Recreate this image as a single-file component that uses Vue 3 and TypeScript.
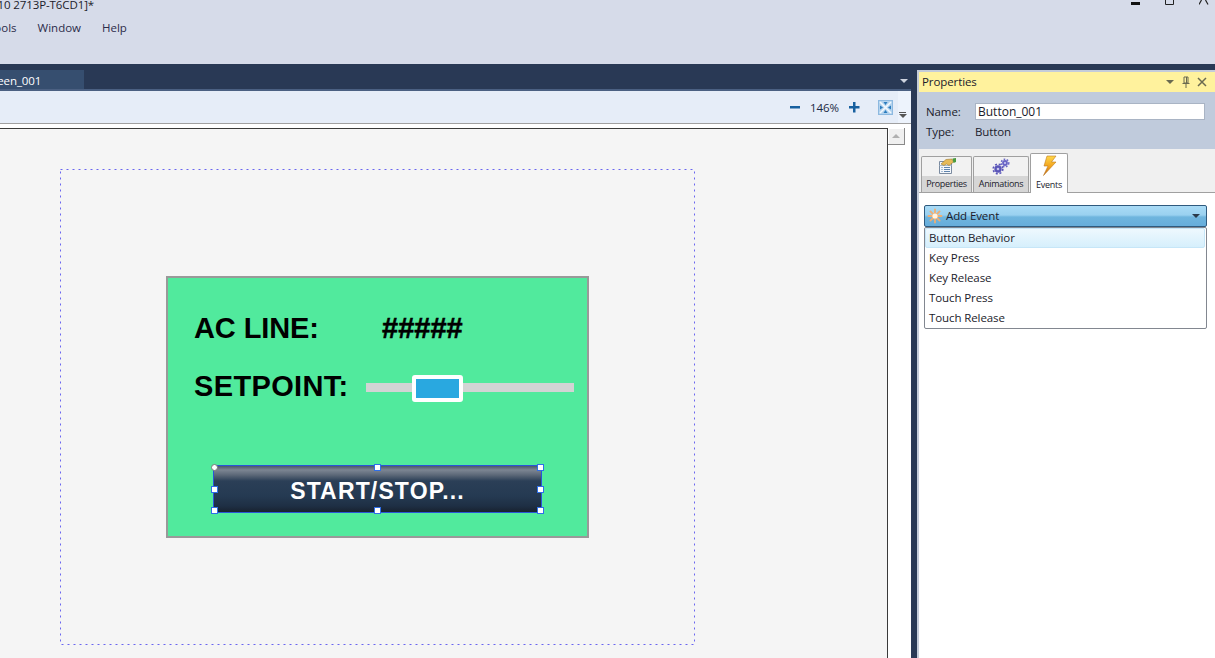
<template>
  <div class="app">
    <header class="top">
      <div class="title-row">
        <span class="title">[V10 2713P-T6CD1]*</span>
        <div class="win-btns">
          <svg width="10" height="5" viewBox="0 0 10 5"><rect x="0" y="2" width="9" height="3" fill="#111" /></svg>
          <svg width="10" height="5" viewBox="0 0 10 5"><path d="M.5 0v4.500h8V0" fill="none" stroke="#222" /></svg>
          <svg width="10" height="5" viewBox="0 0 10 5"><path d="M2.500 0 0 4.500M6.500 0 9 4.500" fill="none" stroke="#222" stroke-width="1.200" /></svg>
        </div>
      </div>
      <nav class="menu">
        <span v-for="m in menus" :key="m">{{ m }}</span>
      </nav>
    </header>

    <main class="body">
      <section class="editor">
        <div class="tab-strip">
          <div class="doc-tab">Screen_001</div>
          <span class="strip-arrow"></span>
        </div>
        <div class="toolbar">
          <div class="zoom-tools">
            <svg class="zoom-btn" width="11" height="11" viewBox="0 0 11 11"><rect y="4" width="10" height="2.500" fill="#17609f" /></svg>
            <span class="zoom-val">146%</span>
            <svg class="zoom-btn" width="11" height="11" viewBox="0 0 11 11"><path d="M0 4h4V0h2.500v4h4v2.500h-4v4H4v-4H0z" fill="#17609f" /></svg>
            <svg class="fit" width="15" height="15" viewBox="0 0 15 15">
              <rect width="15" height="15" fill="#b4d3ee" />
              <rect x=".5" y=".5" width="14" height="14" fill="none" stroke="#8db9e0" />
              <path d="M2 2l11 11M13 2 2 13" stroke="#f4f9fe" stroke-width="1.500" />
              <path d="M2 5.500v4l3-2zM13 5.500v4l-3-2zM5.500 2h4l-2 3zM5.500 13h4l-2-3z" fill="#2b7cbd" />
            </svg>
          </div>
          <div class="overflow">
            <i class="ov-line"></i>
            <i class="ov-arrow"></i>
          </div>
        </div>
        <div class="work">
          <div class="canvas">
            <div class="page">
              <svg class="page-frame" width="635" height="476" viewBox="0 0 635 476">
                <rect x=".5" y=".5" width="634" height="475" fill="none" stroke="#6a66f0" stroke-dasharray="2 4" />
              </svg>
              <div class="screen">
                <span class="lbl lbl-ac">AC LINE:</span>
                <span class="lbl lbl-val">#####</span>
                <span class="lbl lbl-set">SETPOINT:</span>
                <div class="track"></div>
                <div class="thumb"></div>
                <div class="hmi-btn">START/STOP...</div>
                <i
                  v-for="h in handles"
                  :key="h.id"
                  class="handle"
                  :class="{ round: h.round }"
                  :style="{ left: h.x + 'px', top: h.y + 'px' }"
                ></i>
              </div>
            </div>
          </div>
          <div class="vscroll">
            <div class="sc-up"><i></i></div>
          </div>
        </div>
      </section>

      <aside class="panel">
        <div class="p-title">
          <span>Properties</span>
          <div class="p-icons">
            <i class="p-drop"></i>
            <svg width="10" height="12" viewBox="0 0 10 12"><path d="M3 1h4v6H3zM5.500 1v6M1.500 7.500h7M5 8v4" fill="none" stroke="#6a6a50" /></svg>
            <svg width="10" height="10" viewBox="0 0 10 10"><path d="M1 1l8 8M9 1l-8 8" stroke="#6a6a50" stroke-width="1.500" /></svg>
          </div>
        </div>
        <div class="p-info">
          <div class="info-row">
            <label>Name:</label>
            <input value="Button_001" readonly />
          </div>
          <div class="info-row type">
            <label>Type:</label>
            <span>Button</span>
          </div>
        </div>
        <div class="p-tabs">
          <div class="ptab tab-props">
            <svg width="20" height="18" viewBox="0 0 20 18">
              <path d="M2.500 3.500h12v12h-12z" fill="#f4f7fb" stroke="#7b8ba0" />
              <path d="M2.500 7.500h12" stroke="#a9bbd0" />
              <path d="M4.500 9.500h1M7 9.500h6M4.500 11.500h1M7 11.500h6M4.500 13.500h1M7 13.500h6" stroke="#5f84ad" />
              <path d="M4 6l5-4.500 6-.5 1.500 3L12 7.500 9.500 6 7 7.500z" fill="#e6ba58" stroke="#a07c30" stroke-width=".6" />
              <path d="M15.500 .5 19 0v4l-2.500 1z" fill="#4a9a3e" />
            </svg>
            <span class="ptab-label">Properties</span>
          </div>
          <div class="ptab tab-anim">
            <svg width="20" height="18" viewBox="0 0 20 18">
              <circle cx="7" cy="11" r="3.700" fill="#5a55b8" />
              <circle cx="7" cy="11" r="4.800" fill="none" stroke="#5a55b8" stroke-width="1.600" stroke-dasharray="2 1.800" />
              <circle cx="7" cy="11" r="1.300" fill="#c7c6ea" />
              <circle cx="14" cy="5" r="2.900" fill="#6a66c6" />
              <circle cx="14" cy="5" r="3.800" fill="none" stroke="#6a66c6" stroke-width="1.400" stroke-dasharray="1.700 1.500" />
              <circle cx="14" cy="5" r="1" fill="#d3d2f0" />
            </svg>
            <span class="ptab-label">Animations</span>
          </div>
          <div class="ptab tab-events active">
            <svg width="15" height="21" viewBox="0 0 15 21">
              <defs>
                <linearGradient id="bolt" x1="0" y1="0" x2="0" y2="1">
                  <stop offset="0" stop-color="#ffd84a" />
                  <stop offset=".55" stop-color="#f2a21c" />
                  <stop offset="1" stop-color="#b9651b" />
                </linearGradient>
              </defs>
              <path d="M5 1h9L9.500 7H14L1.500 20.500 6 11H2z" fill="url(#bolt)" stroke="#c07a20" stroke-width=".6" />
            </svg>
            <span class="ptab-label">Events</span>
          </div>
        </div>
        <div class="p-content">
          <div class="add-event">
            <svg width="16" height="16" viewBox="0 0 16 16">
              <g stroke="#efae72" stroke-width="1.800" stroke-linecap="round">
                <path d="M8 1.500v13M1.500 8h13M3.400 3.400l9.200 9.200M12.600 3.400l-9.200 9.200" />
              </g>
              <circle cx="8" cy="8" r="2.600" fill="#fff4e2" />
            </svg>
            <span>Add Event</span>
            <i class="ae-arrow"></i>
          </div>
          <ul class="ev-list">
            <li v-for="(e, i) in events" :key="e" :class="{ sel: i === 0 }">{{ e }}</li>
          </ul>
        </div>
      </aside>
    </main>
  </div>
</template>

<script setup lang="ts">
interface Handle {
  id: string;
  x: number;
  y: number;
  round?: boolean;
}

const menus: string[] = ['Tools', 'Window', 'Help'];
const events: string[] = ['Button Behavior', 'Key Press', 'Key Release', 'Touch Press', 'Touch Release'];

// selection handles round the button, relative to the green screen
const handles: Handle[] = [
  { id: 'tl', x: 43, y: 186, round: true },
  { id: 'tc', x: 206, y: 186 },
  { id: 'tr', x: 369, y: 186 },
  { id: 'ml', x: 43, y: 208 },
  { id: 'mr', x: 369, y: 208 },
  { id: 'bl', x: 43, y: 229 },
  { id: 'bc', x: 206, y: 229 },
  { id: 'br', x: 369, y: 229 }
];
</script>

<style>
html,
body {
  margin: 0;
  overflow: hidden;
}
</style>

<style scoped>
.app {
  width: 1215px;
  height: 658px;
  display: flex;
  flex-direction: column;
  overflow: hidden;
  background: #293955;
  font-family: 'Open Sans', 'Noto Sans', sans-serif;
  font-size: 11.5px;
  letter-spacing: -0.1px;
  color: #1b1b2b;
}

.top {
  height: 64px;
  flex: none;
  background: #d6dbe9;
}

.title-row {
  height: 12px;
  position: relative;
}

.title {
  display: block;
  margin-left: -13px;
  line-height: 10px;
  white-space: nowrap;
}

.win-btns {
  position: absolute;
  top: 0;
  left: 1131px;
  display: flex;
  gap: 24px;
}

.menu {
  display: flex;
  gap: 21px;
  margin-top: 9px;
  margin-left: -12px;
  line-height: 14px;
  letter-spacing: 0;
  color: #2c2c4a;
}

.body {
  flex: 1;
  display: flex;
  min-height: 0;
}

.editor {
  width: 911px;
  flex: none;
  display: flex;
  flex-direction: column;
}

.tab-strip {
  height: 25px;
  flex: none;
  display: flex;
  align-items: flex-end;
  justify-content: space-between;
  border-bottom: 2px solid #4b6082;
}

.doc-tab {
  width: 84px;
  height: 19px;
  line-height: 22px;
  background: #364e6f;
  color: #fff;
  text-indent: -19px;
  white-space: nowrap;
  overflow: hidden;
}

.strip-arrow {
  width: 0;
  height: 0;
  margin: 0 3px 6px 0;
  border-left: 4px solid transparent;
  border-right: 4px solid transparent;
  border-top: 4px solid #ced4df;
}

.toolbar {
  height: 32px;
  flex: none;
  display: flex;
  justify-content: flex-end;
  background: #e6edf8;
  border-bottom: 1px solid #a0a0a0;
}

.zoom-tools {
  display: flex;
  align-items: center;
  padding-top: 1px;
  color: #1c2a44;
}

.zoom-val {
  margin: 0 9px 0 9px;
  width: 30px;
  white-space: nowrap;
  letter-spacing: -0.1px;
}

.fit {
  margin-left: 18px;
  margin-right: 5px;
}

.overflow {
  width: 13px;
  box-sizing: border-box;
  display: flex;
  flex-direction: column;
  align-items: center;
  padding: 21px 4px 0 0;
  background: #edf3fc;
}

.ov-line {
  width: 7px;
  height: 1px;
  background: #555;
  margin-bottom: 1px;
}

.ov-arrow {
  width: 0;
  height: 0;
  border-left: 4px solid transparent;
  border-right: 4px solid transparent;
  border-top: 4px solid #555;
}

.work {
  flex: 1;
  display: flex;
  min-height: 0;
  background: #fff;
  padding-top: 4px;
  padding-right: 6px;
}

.canvas {
  flex: 1;
  position: relative;
  background: #f5f5f5;
  border-top: 1px solid #3a3a3a;
  border-right: 1px solid #3a3a3a;
}

.page {
  position: absolute;
  left: 60px;
  top: 40px;
  width: 635px;
  height: 476px;
}

.page-frame {
  position: absolute;
  left: 0;
  top: 0;
}

.screen {
  position: absolute;
  left: 106px;
  top: 107px;
  width: 419px;
  height: 258px;
  border: 2px solid #999;
  background: #51ea9d;
  font-family: 'Liberation Sans', Arial, sans-serif;
  font-weight: 700;
  letter-spacing: 0;
  color: #000;
}

.lbl {
  position: absolute;
  font-size: 29px;
  line-height: 34px;
  white-space: nowrap;
}

.lbl-ac {
  left: 26px;
  top: 33px;
  letter-spacing: -0.1px;
}

.lbl-val {
  left: 214px;
  top: 33px;
  -webkit-text-stroke: 0.5px #000;
}

.lbl-set {
  left: 26px;
  top: 91px;
  letter-spacing: 0.35px;
}

.track {
  position: absolute;
  left: 198px;
  top: 105px;
  width: 208px;
  height: 9px;
  background: #d2d4d4;
}

.thumb {
  position: absolute;
  left: 244px;
  top: 97px;
  width: 43px;
  height: 19px;
  border: 4px solid #fff;
  border-radius: 3px;
  background: #29a8e0;
}

.hmi-btn {
  position: absolute;
  left: 45px;
  top: 187px;
  width: 329px;
  height: 48px;
  box-sizing: border-box;
  border: 1px solid #2a55d8;
  background: linear-gradient(
    to bottom,
    #4a586c 0,
    #7c8592 4px,
    #5c6878 9px,
    #2b3f57 15px,
    #253a52 30px,
    #1e2f44 40px,
    #18222f 100%
  );
  color: #fff;
  font-size: 23px;
  line-height: 50px;
  letter-spacing: 1.15px;
  text-align: center;
}

.handle {
  position: absolute;
  width: 5px;
  height: 5px;
  border: 1px solid #2f6fe8;
  background: #fff;
}

.handle.round {
  border-radius: 50%;
  border-color: #777;
}

.vscroll {
  width: 17px;
  flex: none;
}

.sc-up {
  height: 16px;
  display: flex;
  align-items: center;
  justify-content: center;
  background: #f0f0f0;
  border-right: 1px solid #8a8a8a;
  border-bottom: 1px solid #8a8a8a;
  box-shadow: inset 1px 1px 0 #fff;
}

.sc-up i {
  width: 0;
  height: 0;
  border-left: 4px solid transparent;
  border-right: 4px solid transparent;
  border-bottom: 4px solid #b0b0b0;
}

.panel {
  width: 298px;
  flex: none;
  box-sizing: border-box;
  margin-left: 6px;
  margin-top: 6px;
  display: flex;
  flex-direction: column;
  background: #fff;
  border-left: 2px solid #c4ccd9;
  border-top: 2px solid #c4ccd9;
}

.p-title {
  height: 20px;
  flex: none;
  display: flex;
  align-items: center;
  justify-content: space-between;
  padding: 0 8px 0 3px;
  background: #fff29d;
  line-height: 20px;
}

.p-icons {
  display: flex;
  align-items: center;
  gap: 6px;
}

.p-drop {
  width: 0;
  height: 0;
  margin-right: 1px;
  border-left: 4px solid transparent;
  border-right: 4px solid transparent;
  border-top: 4px solid #6a6a50;
}

.p-info {
  height: 57px;
  flex: none;
  box-sizing: border-box;
  padding: 11px 7px 0 7px;
  background: #c0cbdc;
}

.info-row {
  display: flex;
  align-items: center;
  height: 17px;
}

.info-row.type {
  margin-top: 3px;
}

.info-row label {
  width: 49px;
  flex: none;
}

.info-row input {
  width: 230px;
  height: 17px;
  box-sizing: border-box;
  border: 1px solid #a9b4c4;
  padding: 0 2px;
  font-family: inherit;
  font-size: 12px;
  letter-spacing: 0;
  color: inherit;
  background: #fff;
  outline: none;
}

.p-tabs {
  height: 44px;
  flex: none;
  box-sizing: border-box;
  display: flex;
  align-items: flex-end;
  gap: 1px;
  padding-left: 2px;
  background: #f0f0f0;
  border-bottom: 1px solid #a0a0a0;
}

.ptab {
  height: 36px;
  box-sizing: border-box;
  display: flex;
  flex-direction: column;
  align-items: center;
  justify-content: flex-start;
  border: 1px solid #a0a0a0;
  border-bottom: none;
  border-radius: 2px 2px 0 0;
  background: linear-gradient(to bottom, #f2f2f2 0, #f2f2f2 19px, #d6d6d6 19px, #d6d6d6 100%);
}

.tab-props {
  width: 51px;
}

.tab-anim {
  width: 56px;
}

.tab-events {
  width: 38px;
}

.ptab svg {
  flex: none;
  margin-top: 1px;
}

.ptab-label {
  font-size: 9px;
  line-height: 15px;
  letter-spacing: -0.3px;
  white-space: nowrap;
}

.ptab.active {
  height: 40px;
  margin-bottom: -1px;
  background: #fff;
  z-index: 1;
}

.ptab.active .ptab-label {
  line-height: 15px;
  margin-top: 1px;
}

.p-content {
  flex: 1;
  padding: 12px 0 0 5px;
  background: #fff;
}

.add-event {
  width: 283px;
  height: 22px;
  box-sizing: border-box;
  display: flex;
  align-items: center;
  gap: 3px;
  padding: 0 6px 0 2px;
  border: 1px solid #2f5a7e;
  border-radius: 2px;
  background: linear-gradient(to bottom, #a9dbf6 0, #9ad1f0 45%, #6fb5de 55%, #66addb 100%);
  line-height: 20px;
}

.ae-arrow {
  margin-left: auto;
  width: 0;
  height: 0;
  border-left: 4px solid transparent;
  border-right: 4px solid transparent;
  border-top: 4px solid #2a3a4a;
}

.ev-list {
  list-style: none;
  margin: 0;
  padding: 0;
  width: 283px;
  height: 102px;
  box-sizing: border-box;
  border: 1px solid #828790;
  border-radius: 2px;
  background: #fff;
}

.ev-list li {
  height: 20px;
  line-height: 20px;
  padding-left: 4px;
  box-sizing: border-box;
  white-space: nowrap;
}

.ev-list li.sel {
  margin-right: 1px;
  border: 1px solid #c6e6f8;
  border-radius: 2px;
  padding-left: 3px;
  line-height: 18px;
  background: linear-gradient(to bottom, #eef8fe, #d6effc);
}
</style>
